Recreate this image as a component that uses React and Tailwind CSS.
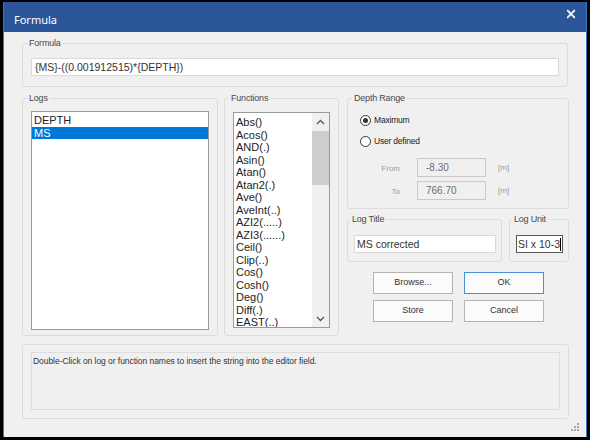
import React from "react";

const FN = [
  "Abs()",
  "Acos()",
  "AND(.)",
  "Asin()",
  "Atan()",
  "Atan2(.)",
  "Ave()",
  "AveInt(..)",
  "AZI2(.....)",
  "AZI3(......)",
  "Ceil()",
  "Clip(..)",
  "Cos()",
  "Cosh()",
  "Deg()",
  "Diff(.)",
  "EAST(..)",
];

const sans = { fontFamily: '"Liberation Sans", Arial, sans-serif' };

function Legend({ children }) {
  return (
    <legend className="-ml-[4px] px-[2px] text-[9px] leading-[10px] text-[#4a4a4a] tracking-[-0.2px]">
      {children}
    </legend>
  );
}

function Radio({ checked, label }) {
  return (
    <div className="flex items-center ml-[4px] h-[11px]">
      <div className="w-[11px] h-[11px] rounded-full border border-[#333] bg-white flex items-center justify-center">
        {checked && <div className="w-[5px] h-[5px] rounded-full bg-[#333]" />}
      </div>
      <span className="ml-[3px] text-[8.5px] leading-[11px] text-[#222] tracking-[-0.2px]">{label}</span>
    </div>
  );
}

function Btn({ children, primary }) {
  return (
    <div
      className={
        "w-[80px] h-[22px] flex items-center justify-center text-[9px] text-[#333] bg-[#fbfbfb] border " +
        (primary ? "border-[#4a8fdc]" : "border-[#b4b4b4]")
      }
    >
      {children}
    </div>
  );
}

export default function App() {
  return (
    <div className="w-[590px] h-[440px] bg-black pt-[2px] pl-[3px] pr-[3px] pb-[3px] flex" style={sans}>
      <div className="flex-1 flex flex-col border-l border-r border-[#3a78bd] bg-[#f0f0f0]">
        {/* title bar */}
        <div className="h-[30px] bg-[#2b579a] flex justify-between items-start">
          <span
            className="ml-[10px] mt-[11px] text-[11px] leading-[14px] text-white"
            style={{ fontFamily: '"Noto Sans", "Open Sans", sans-serif' }}
          >
            Formula
          </span>
          <svg className="mr-[9px] mt-[5.5px]" width="12" height="12" viewBox="0 0 12 12">
            <path d="M2.2 2.2 L9.8 9.8 M9.8 2.2 L2.2 9.8" stroke="white" strokeWidth="1.7" />
          </svg>
        </div>

        {/* body */}
        <div className="flex-1 flex flex-col pl-[18px] pr-[17px] pt-[6px]">
          {/* formula */}
          <fieldset className="w-[546px] border border-[#dcdcdc] rounded-[3px] px-[8px] pb-[10px]">
            <Legend>Formula</Legend>
            <div className="mt-[10px] h-[18px] bg-white border border-[#d9d9d9] pl-[3px] text-[10.5px] leading-[16px] text-[#333]">
              {"{MS}-((0.001912515)*{DEPTH})"}
            </div>
          </fieldset>

          <div className="flex mt-[6px]">
            {/* logs */}
            <fieldset className="w-[196px] h-[243px] border border-[#dcdcdc] rounded-[3px] px-[8px]">
              <Legend>Logs</Legend>
              <div className="mt-[8px] h-[219px] bg-white border border-[#9a9a9a] text-[11px] leading-[12.5px] text-[#222]">
                <div className="pl-[2px] pt-[2px]">DEPTH</div>
                <div className="pl-[2px] bg-[#0078d7] text-white">MS</div>
              </div>
            </fieldset>

            {/* functions */}
            <fieldset className="ml-[6px] w-[115px] h-[243px] border border-[#dcdcdc] rounded-[3px] px-[8px]">
              <Legend>Functions</Legend>
              <div className="mt-[9px] h-[216px] bg-white border border-[#9a9a9a] flex overflow-hidden">
                <div className="flex-1 pl-[2px] pt-[3px] text-[11px] leading-[12.5px] text-[#222] overflow-hidden whitespace-nowrap">
                  {FN.map((f) => (
                    <div key={f}>{f}</div>
                  ))}
                </div>
                <div className="w-[17px] bg-[#f0f0f0] flex flex-col items-center">
                  <svg className="mt-[6px]" width="9" height="6" viewBox="0 0 9 6">
                    <path d="M1 5 L4.5 1.5 L8 5" stroke="#555" strokeWidth="1.3" fill="none" />
                  </svg>
                  <div className="mt-[6px] w-[17px] h-[54px] bg-[#cdcdcd]" />
                  <div className="flex-1" />
                  <svg className="mb-[5px]" width="9" height="6" viewBox="0 0 9 6">
                    <path d="M1 1 L4.5 4.5 L8 1" stroke="#555" strokeWidth="1.3" fill="none" />
                  </svg>
                </div>
              </div>
            </fieldset>

            {/* right column */}
            <div className="ml-[8px] w-[222px] flex flex-col">
              <fieldset className="h-[116px] border border-[#dcdcdc] rounded-[3px] px-[8px]">
                <Legend>Depth Range</Legend>
                <div className="mt-[12px] flex flex-col gap-[10px]">
                  <Radio checked label="Maximum" />
                  <Radio label="User defined" />
                </div>
                <div className="mt-[11px] flex flex-col gap-[4px] text-[#9a9a9a]">
                  <div className="flex items-center h-[19px]">
                    <span className="w-[44px] text-right text-[8px] pt-[2px]">From</span>
                    <div className="ml-[17px] w-[69px] h-[19px] border border-[#c8c8c8] pl-[8px] text-[10px] leading-[17px] text-[#6d6d6d]">
                      -8.30
                    </div>
                    <span className="ml-[12px] text-[8px] pt-[1px]">[m]</span>
                  </div>
                  <div className="flex items-center h-[19px]">
                    <span className="w-[44px] text-right text-[8px] pt-[2px]">To</span>
                    <div className="ml-[17px] w-[69px] h-[19px] border border-[#c8c8c8] pl-[8px] text-[10px] leading-[17px] text-[#6d6d6d]">
                      766.70
                    </div>
                    <span className="ml-[12px] text-[8px] pt-[1px]">[m]</span>
                  </div>
                </div>
              </fieldset>

              <div className="flex mt-[5px]">
                <fieldset className="w-[155px] h-[48px] border border-[#dcdcdc] rounded-[3px] pl-[6px] pr-[5px]">
                  <Legend>Log Title</Legend>
                  <div className="mt-[11px] h-[18px] bg-white border border-[#d9d9d9] pl-[2px] text-[10.5px] leading-[16px] text-[#333]">
                    MS corrected
                  </div>
                </fieldset>
                <fieldset className="ml-[7px] w-[60px] h-[48px] border border-[#dcdcdc] rounded-[3px] pl-[6px] pr-[5px]">
                  <Legend>Log Unit</Legend>
                  <div className="mt-[11px] h-[18px] bg-white border border-[#555] pl-[1px] text-[10.5px] leading-[16px] text-[#333] whitespace-nowrap flex">
                    <span>SI x 10-3</span>
                    <span className="w-[1px] h-[13px] mt-[1.5px] bg-black" />
                  </div>
                </fieldset>
              </div>

              <div className="ml-[26px] mt-[10px] flex flex-col gap-[6px]">
                <div className="flex gap-[11px]">
                  <Btn>Browse...</Btn>
                  <Btn primary>OK</Btn>
                </div>
                <div className="flex gap-[11px]">
                  <Btn>Store</Btn>
                  <Btn>Cancel</Btn>
                </div>
              </div>
            </div>
          </div>

          {/* info */}
          <fieldset className="mt-[8px] w-[547px] h-[75px] border border-[#dcdcdc] rounded-[3px] px-[8px] pt-[7px]">
            <div className="h-[58px] border border-[#dcdcdc] pl-[1px] pt-[3px] text-[8.5px] leading-[10px] text-[#333] tracking-[-0.05px]">
              Double-Click on log or function names to insert the string into the editor field.
            </div>
          </fieldset>

          <div className="flex justify-end -mr-[11px] mt-[4px]">
            <svg width="9" height="9" viewBox="0 0 9 9">
              <rect x="6" y="0" width="2" height="2" fill="#a8a8a8" />
              <rect x="3" y="3" width="2" height="2" fill="#a8a8a8" />
              <rect x="6" y="3" width="2" height="2" fill="#a8a8a8" />
              <rect x="0" y="6" width="2" height="2" fill="#a8a8a8" />
              <rect x="3" y="6" width="2" height="2" fill="#a8a8a8" />
              <rect x="6" y="6" width="2" height="2" fill="#a8a8a8" />
            </svg>
          </div>
        </div>
      </div>
    </div>
  );
}
